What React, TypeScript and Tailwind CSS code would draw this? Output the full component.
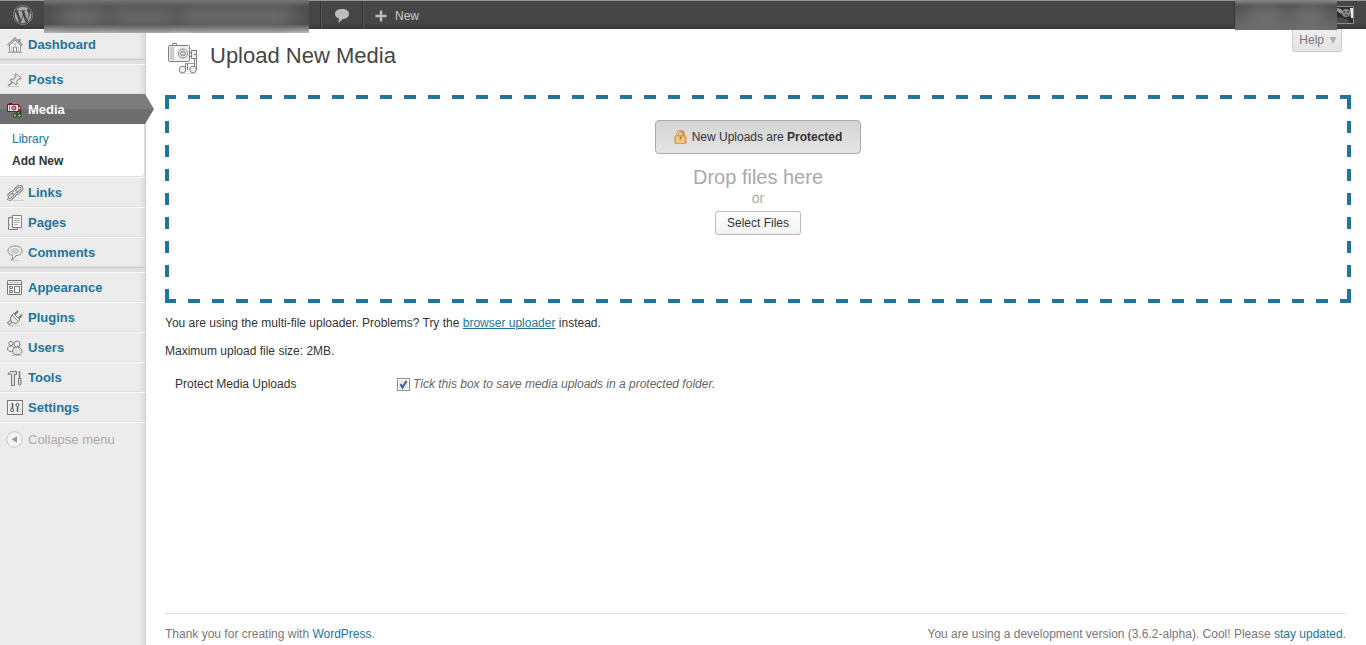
import React from 'react';
import { FaWordpress } from 'react-icons/fa';

const DashboardIcon = () => (
  <svg width="16" height="16" viewBox="0 0 16 16" fill="none" stroke="#888">
    <path d="M12.500 2v4" strokeWidth="2" />
    <path d="M2.500 8v7h11V8L8 3z" fill="#f3f3f3" stroke="#999" />
    <path d="M.8 8.500L8 1.500l7.200 7" stroke="#808080" strokeWidth="2.200" />
    <path d="M1 8.300l7-6.700 7 6.700" stroke="#f2f2f2" strokeWidth=".8" />
    <path d="M6.500 15v-5h3v5M7 7h2" />
    <path d="M4.500 9v6M11.500 9v6" stroke="#c4c4c4" />
    <path d="M1 15.500h14" stroke="#aaa" />
  </svg>
);

const PostsIcon = () => (
  <svg width="16" height="16" viewBox="0 0 16 16" fill="#e4e4e4" stroke="#808080">
    <path d="M2 14.500h10" stroke="#ccc" />
    <path d="M5.500 10L1 14" strokeWidth="1.300" />
    <path d="M8.500 1.500l6 4.500-1 1.200-1.600-.4-2 2.400.3 2.600-1.200.9L3 8.200l1-1.200 2.800.1 2-2.400-.9-2.100z" />
    <path d="M9.500 3.500l3 2.300M5.500 8.200l3.400 2.500" stroke="#fff" />
  </svg>
);

const MediaIcon = () => (
  <svg width="16" height="16" viewBox="0 0 16 16" fill="none">
    <path d="M2 1.500h3" stroke="#5e1024" />
    <rect x=".5" y="2.500" width="11" height="7" fill="#f6e3e7" stroke="#7b1530" />
    <path d="M2.500 3v6" stroke="#d06a83" />
    <path d="M11.500 4.500h2v3h-2" fill="#eee" stroke="#7b1530" />
    <circle cx="6.900" cy="6" r="2" fill="#fff" stroke="#5e1024" />
    <circle cx="6.900" cy="6" r=".8" fill="#333" />
    <path d="M9.500 13v-2.500M13.500 13V8" stroke="#1f3d14" strokeWidth="1.500" />
    <circle cx="8" cy="13.500" r="1.700" fill="#8ed268" stroke="#1f3d14" />
    <circle cx="12.500" cy="13.500" r="1.700" fill="#8ed268" stroke="#1f3d14" />
  </svg>
);

const LinksIcon = () => (
  <svg width="18" height="16" viewBox="0 0 18 16" fill="none">
    <path d="M5 15.500h12" stroke="#ccc" />
    <g stroke="#777" strokeWidth="2.600">
      <rect x="7" y="2.500" width="8.500" height="4.600" rx="2.300" transform="rotate(-45 11.200 4.800)" />
      <rect x="0" y="8.500" width="8.500" height="4.600" rx="2.300" transform="rotate(-45 4.200 10.800)" />
      <path d="M5.500 9.700L10 5.500" />
    </g>
    <g stroke="#ededed">
      <rect x="7" y="2.500" width="8.500" height="4.600" rx="2.300" transform="rotate(-45 11.200 4.800)" />
      <rect x="0" y="8.500" width="8.500" height="4.600" rx="2.300" transform="rotate(-45 4.200 10.800)" />
      <path d="M5.500 9.700L10 5.500" />
    </g>
  </svg>
);

const PagesIcon = () => (
  <svg width="16" height="16" viewBox="0 0 16 16" fill="#ddd" stroke="#808080">
    <path d="M1.500 2.500h9v12h-9z" />
    <path d="M3.500 3v11" stroke="#f5f5f5" />
    <path d="M5.500.5h9v12h-9z" fill="#f7f7f7" />
    <path d="M7 3.500h6M7 5.500h6M7 7.500h6M7 9.500h4" stroke="#b0b0b0" />
  </svg>
);

const CommentsIcon = () => (
  <svg width="16" height="16" viewBox="0 0 16 16" fill="none">
    <path d="M4 15.500h8" stroke="#ccc" />
    <path d="M8 1c4 0 7 1.800 7 4.700s-3 4.800-6 4.800c-1 2-2.500 3.800-4.500 4.300.9-1 1.300-2.800 1.100-4.500C2.700 9.700 1 8.100 1 5.700 1 2.800 4 1 8 1z" fill="#f8f8f8" stroke="#808080" />
    <ellipse cx="8" cy="6" rx="5" ry="3.200" fill="#d0d0d0" />
  </svg>
);

const AppearanceIcon = () => (
  <svg width="16" height="16" viewBox="0 0 16 16" fill="none" stroke="#777">
    <rect x=".5" y=".5" width="14" height="14" rx=".5" fill="#f6f6f6" />
    <path d="M2 2.500h11" stroke="#bbb" />
    <path d="M1 4.500h13" />
    <path d="M2.500 6.500h3v2h-3zM2.500 10.500h3v2h-3zM7.500 6.500h5v6h-5z" />
  </svg>
);

const PluginsIcon = () => (
  <svg width="17" height="16" viewBox="0 0 17 16" fill="none" stroke="#777">
    <path d="M3 15.500h10" stroke="#ccc" />
    <path d="M4.500 11L1 14" strokeWidth="3.500" />
    <path d="M5 10.500L1.500 13.500" stroke="#eee" strokeWidth="1.500" />
    <path d="M5 5l6.500 6.500C9.500 14 6.500 13.800 4.800 12 3 10.300 3 7.500 5 5z" fill="#e6e6e6" />
    <path d="M5 5l1.500-1.500 6.500 6.500-1.500 1.500z" fill="#fafafa" />
    <path d="M7.500 4.500L11 1M11.500 8.500L15 5" strokeWidth="2" />
  </svg>
);

const UsersIcon = () => (
  <svg width="16" height="16" viewBox="0 0 16 16" fill="#eee" stroke="#808080">
    <path d="M5 15.500h10" stroke="#ccc" />
    <circle cx="4" cy="3.500" r="2.200" />
    <path d="M4 6C1.500 6 .5 7.500.5 9S2 11.500 4 11.500s3-1 3-2.500-.8-3-3-3z" />
    <circle cx="10" cy="4" r="3" />
    <path d="M10 7c-3 0-4.500 2-4.500 4.500 0 2 1.700 3.200 4.500 3.200s5-1.200 5-3.200C15 9 13 7 10 7z" fill="#e2e2e2" />
  </svg>
);

const ToolsIcon = () => (
  <svg width="16" height="16" viewBox="0 0 16 16" fill="#ddd" stroke="#777">
    <path d="M1 4.500c.5-1.800 1.700-3 3.500-3h5v3H7.500v11h-3v-11C3.300 4 2 4 1 4.500z" />
    <path d="M12.500 1v7" strokeWidth="1.500" />
    <path d="M11.500 8.500h2.500v5.500c0 .8-.5 1-1.300 1s-1.200-.3-1.200-1z" />
  </svg>
);

const SettingsIcon = () => (
  <svg width="17" height="16" viewBox="0 0 17 16" fill="none" stroke="#555">
    <rect x=".5" y=".5" width="15" height="14" fill="#f4f4f4" stroke="#777" />
    <path d="M5.500 3v5M10.500 7v5" strokeWidth="1.500" />
    <circle cx="5.200" cy="10" r="1.600" />
    <circle cx="10.500" cy="5" r="1.600" />
    <path d="M3 4v1M3 6.500v1M13 8.500v1M13 11v1" stroke="#aaa" />
  </svg>
);

const UploadIcon = () => (
  <svg width="32" height="32" viewBox="0 0 32 32" fill="none" stroke="#808080">
    <path d="M5.500 3.500v-2h4v2" />
    <path d="M13 31.500h18" stroke="#ddd" />
    <path d="M28.500 16v12" strokeWidth="3" />
    <path d="M28.500 16v12" stroke="#f4f4f4" />
    <path d="M19.500 28v-7" strokeWidth="3" />
    <path d="M19.500 28v-7" stroke="#f4f4f4" />
    <path d="M18 21.500h10" stroke="#999" />
    <rect x="1.500" y="3.500" width="21" height="16" rx="1" fill="#ececec" />
    <path d="M3 5h4v13H3z" fill="#ccc" stroke="none" />
    <path d="M8 5h2v13H8z" fill="#fff" stroke="none" />
    <rect x="24.500" y="8.500" width="5" height="8" fill="#eee" />
    <path d="M22.500 10.500h2M22.500 14.500h2M27 12.500h2" />
    <circle cx="16" cy="11.500" r="4.500" fill="#fff" />
    <circle cx="16" cy="11.500" r="2.500" fill="#d0d0d0" />
    <circle cx="15.500" cy="27.500" r="3.300" fill="#eee" />
    <circle cx="26" cy="27.500" r="3.300" fill="#eee" />
  </svg>
);

const LockIcon = () => (
  <svg width="13" height="14" viewBox="0 0 13 14" fill="none">
    <path d="M3.500 7V4.500c0-2 1.300-3.300 3-3.300s3 1.300 3 3.300V7" stroke="#c8934c" strokeWidth="2.500" />
    <path d="M3.300 7V4.500c0-1.800 1.200-3 3-3" stroke="#f6dcb0" />
    <path d="M1 6.500C2 5.500 4 5.200 6.500 5.200s4.500.3 5.500 1.300v6.800H1z" fill="#eab164" stroke="#cf9449" />
    <path d="M2 8h8M2 10h8M2 12h8" stroke="#f9dda6" />
    <path d="M6.500 6.500v3" stroke="#a87232" strokeWidth="1.500" />
  </svg>
);

const menuGroups = [
  [{ label: 'Dashboard', icon: DashboardIcon }],
  [
    { label: 'Posts', icon: PostsIcon },
    { label: 'Media', icon: MediaIcon, children: ['Library', 'Add New'] },
    { label: 'Links', icon: LinksIcon },
    { label: 'Pages', icon: PagesIcon },
    { label: 'Comments', icon: CommentsIcon },
  ],
  [
    { label: 'Appearance', icon: AppearanceIcon },
    { label: 'Plugins', icon: PluginsIcon },
    { label: 'Users', icon: UsersIcon },
    { label: 'Tools', icon: ToolsIcon },
    { label: 'Settings', icon: SettingsIcon },
  ],
];

const AdminBar = () => (
  <header className="relative z-10 flex h-[29px] shrink-0 border-t border-[#9a9a9a] bg-linear-to-b from-[#464646] from-80% to-[#373737] text-[#ccc]">
    <a href="#" aria-label="About WordPress" className="flex w-11 items-center pl-[13px] text-[#a8a8a8]">
      <FaWordpress size={20} />
    </a>
    <div className="-mt-px h-[33px] w-[265px] overflow-hidden bg-linear-to-b from-[#777] via-[#505050] via-20% to-[#505050] to-70%">
      <div className="flex h-[25px] gap-2 px-4 pt-2 blur-sm">
        <span className="w-11 bg-[#707070]" />
        <span className="w-16 bg-[#6a6a6a]" />
        <span className="w-28 bg-[#707070]" />
      </div>
      <div className="h-2 bg-linear-to-b from-[#5a5a5a] to-[#bbb]" />
    </div>
    <a href="#" aria-label="Comments" className="ml-[11px] flex w-[43px] items-center justify-center border-x border-[#333] pt-px shadow-[inset_1px_0_0_#555]">
      <svg width="16" height="16" viewBox="0 0 16 16" fill="#bdbdbd">
        <path d="M8 1c4 0 7 1.900 7 4.900s-2.700 4.900-6.500 5C7.500 12.500 6 13.700 4 14.500c.8-1.200 1.100-2.500 1-4C2.500 9.700 1 8.200 1 5.900 1 2.900 4 1 8 1z" />
      </svg>
    </a>
    <a href="#" className="flex items-center gap-2 pl-3 pt-px shadow-[inset_1px_0_0_#555]">
      <svg width="12" height="12" viewBox="0 0 12 12" fill="none" stroke="#bdbdbd" strokeWidth="2.500">
        <path d="M6 .5v11M.5 6h11" />
      </svg>
      New
    </a>
    <a href="#" aria-label="My account" className="mr-3 ml-auto flex border-l border-[#333]">
      <div className="-mt-px h-[30px] w-[102px] overflow-hidden bg-linear-to-b from-[#8a8a8a] via-[#505050] via-20% to-[#6c6c6c] pt-2">
        <div className="flex h-4 gap-3 px-3 blur-sm">
          <span className="w-9 bg-[#757575]" />
          <span className="w-8 bg-[#757575]" />
        </div>
      </div>
      <svg width="17" height="18" viewBox="0 0 17 18" className="mt-[5px]">
        <path d="M0 .5h16.500v17H0" fill="#2e2e2e" stroke="#8c8c8c" />
        <path d="M0 2l4 1 2 3-2 2-4-3z" fill="#999" />
        <circle cx="9" cy="7" r="4" fill="#8a8a8a" />
        <path d="M6.500 6h2M10 6h2M8 9h3" stroke="#2a2a2a" />
        <path d="M13 2h3v10h-2z" fill="#e8e8e8" />
        <path d="M0 11l6 1 5 2 2 3H0z" fill="#4a4a4a" />
      </svg>
    </a>
  </header>
);

const Sidebar = () => (
  <aside className="w-[146px] shrink-0 border-r border-[#ccc] bg-linear-to-r from-[#ececec] from-95% to-[#dcdcdc] text-[13px]">
    <nav>
      {menuGroups.map((group, index) => (
        <React.Fragment key={index}>
          {index > 0 && <hr className="h-[5px] border-0 border-t border-[#cacaca] bg-[#e0e0e0]" />}
          <ul>
            {group.map(({ label, icon: Icon, children }) => (
              <li key={label}>
                <a
                  href="#"
                  className={
                    children
                      ? 'relative flex h-[30px] items-center bg-linear-to-b from-[#7c7c7c] from-50% to-[#6d6d6d] to-50% pt-[2px] font-bold text-white'
                      : 'flex h-[30px] items-center border-t border-b border-t-[#f9f9f9] border-b-[#dfdfdf] pt-[2px] font-bold text-[#21759b]'
                  }
                >
                  <span className="flex w-7 shrink-0 pl-[7px]">
                    <Icon />
                  </span>
                  {label}
                  {children && (
                    <svg width="10" height="30" viewBox="0 0 10 30" className="absolute top-0 left-full">
                      <path d="M0 0l9 15H0z" fill="#7c7c7c" />
                      <path d="M0 30l9-15H0z" fill="#6d6d6d" />
                    </svg>
                  )}
                </a>
                {children && (
                  <ul className="rounded-br-sm border-r border-b border-[#dfdfdf] bg-white pt-1 pb-1 text-[12px] leading-[22px]">
                    {children.map((child) => (
                      <li key={child} className="pl-3">
                        <a href="#" className={child === 'Add New' ? 'font-bold text-[#333]' : 'text-[#21759b]'}>
                          {child}
                        </a>
                      </li>
                    ))}
                  </ul>
                )}
              </li>
            ))}
          </ul>
        </React.Fragment>
      ))}
    </nav>
    <button type="button" className="flex h-[34px] w-full items-center border-t border-[#f9f9f9] pl-[6px] text-[#aaa]">
      <svg width="22" height="17" viewBox="0 0 22 17">
        <circle cx="8.500" cy="8.500" r="7.800" fill="#f4f4f4" stroke="#c4c4c4" />
        <path d="M11 5.300v6.400L5.500 8.500z" fill="#999" />
      </svg>
      Collapse menu
    </button>
  </aside>
);

const UploadArea = () => (
  <section
    className="flex h-[208px] flex-col items-center pt-[25px] [background-image:linear-gradient(90deg,#21759b_50%,transparent_50%),linear-gradient(90deg,#21759b_50%,transparent_50%),linear-gradient(#21759b_50%,transparent_50%),linear-gradient(#21759b_50%,transparent_50%)] [background-position:-1px_0,-1px_100%,0_2px,100%_2px] [background-repeat:repeat-x,repeat-x,repeat-y,repeat-y] [background-size:24px_4px,24px_4px,4px_24px,4px_24px]"
  >
    <button type="button" className="flex h-[34px] items-center gap-[5px] rounded border border-[#aaa] bg-linear-to-b from-[#d5d5d5] to-[#e4e4e4] px-[18px]">
      <LockIcon />
      <span>
        New Uploads are <b>Protected</b>
      </span>
    </button>
    <p className="mt-3 text-[20px] leading-[22px] text-[#aaa]">Drop files here</p>
    <p className="text-[14px] leading-5 text-[#aaa]">or</p>
    <button type="button" className="mt-[3px] h-6 rounded-[3px] border border-[#bbb] bg-linear-to-b from-white to-[#f3f3f3] px-[11px]">
      Select Files
    </button>
  </section>
);

const App = () => {
  return (
    <div className="flex min-h-screen flex-col bg-white font-['Liberation_Sans',Arial,sans-serif] text-[12px] leading-[18px] text-[#333]">
      <AdminBar />
      <div className="flex grow">
        <Sidebar />
        <main className="flex grow flex-col pr-[15px] pl-[19px]">
          <div className="flex h-[66px] items-start">
            <div className="flex pt-[13px] pl-[2px]">
              <UploadIcon />
              <h1 className="pl-[11px] text-[22px] leading-7 text-[#464646]">Upload New Media</h1>
            </div>
            <button type="button" className="mr-[9px] ml-auto flex h-[23px] items-center gap-[5px] rounded-b-[3px] border border-t-0 border-[#ccc] bg-linear-to-b from-[#eee] to-[#e3e3e3] pr-1 pl-[6px] text-[#777]">
              Help
              <svg width="8" height="8" viewBox="0 0 8 8" fill="#b0b0b0">
                <path d="M.5 1h7L4 8z" />
              </svg>
            </button>
          </div>

          <UploadArea />

          <p className="mt-[11px]">
            You are using the multi-file uploader. Problems? Try the{' '}
            <a href="#" className="text-[#21759b] underline">browser uploader</a> instead.
          </p>
          <p className="mt-[10px]">Maximum upload file size: 2MB.</p>

          <div className="mt-[15px] flex items-center pl-[10px]">
            <span className="w-[222px]">Protect Media Uploads</span>
            <label className="flex items-center gap-[3px] text-[#666] italic">
              <span className="relative flex">
                <input type="checkbox" defaultChecked className="peer size-[13px] appearance-none border border-[#8e8f8f] bg-[#e6e9ec] shadow-[inset_0_0_0_1px_#fff]" />
                <svg width="13" height="13" viewBox="0 0 13 13" fill="none" className="pointer-events-none absolute inset-0 hidden peer-checked:block">
                  <path d="M3.500 6l2 3.500L9.500 3" stroke="#3f5d9e" strokeWidth="2" />
                </svg>
              </span>
              Tick this box to save media uploads in a protected folder.
            </label>
          </div>

          <footer className="mt-auto mr-[5px] flex justify-between border-t border-[#dfdfdf] pt-[11px] pb-[2px] text-[#777]">
            <p>
              Thank you for creating with <a href="#" className="text-[#21759b]">WordPress</a>.
            </p>
            <p>
              You are using a development version (3.6.2-alpha). Cool! Please{' '}
              <a href="#" className="text-[#21759b]">stay updated</a>.
            </p>
          </footer>
        </main>
      </div>
    </div>
  );
};

export default App;
